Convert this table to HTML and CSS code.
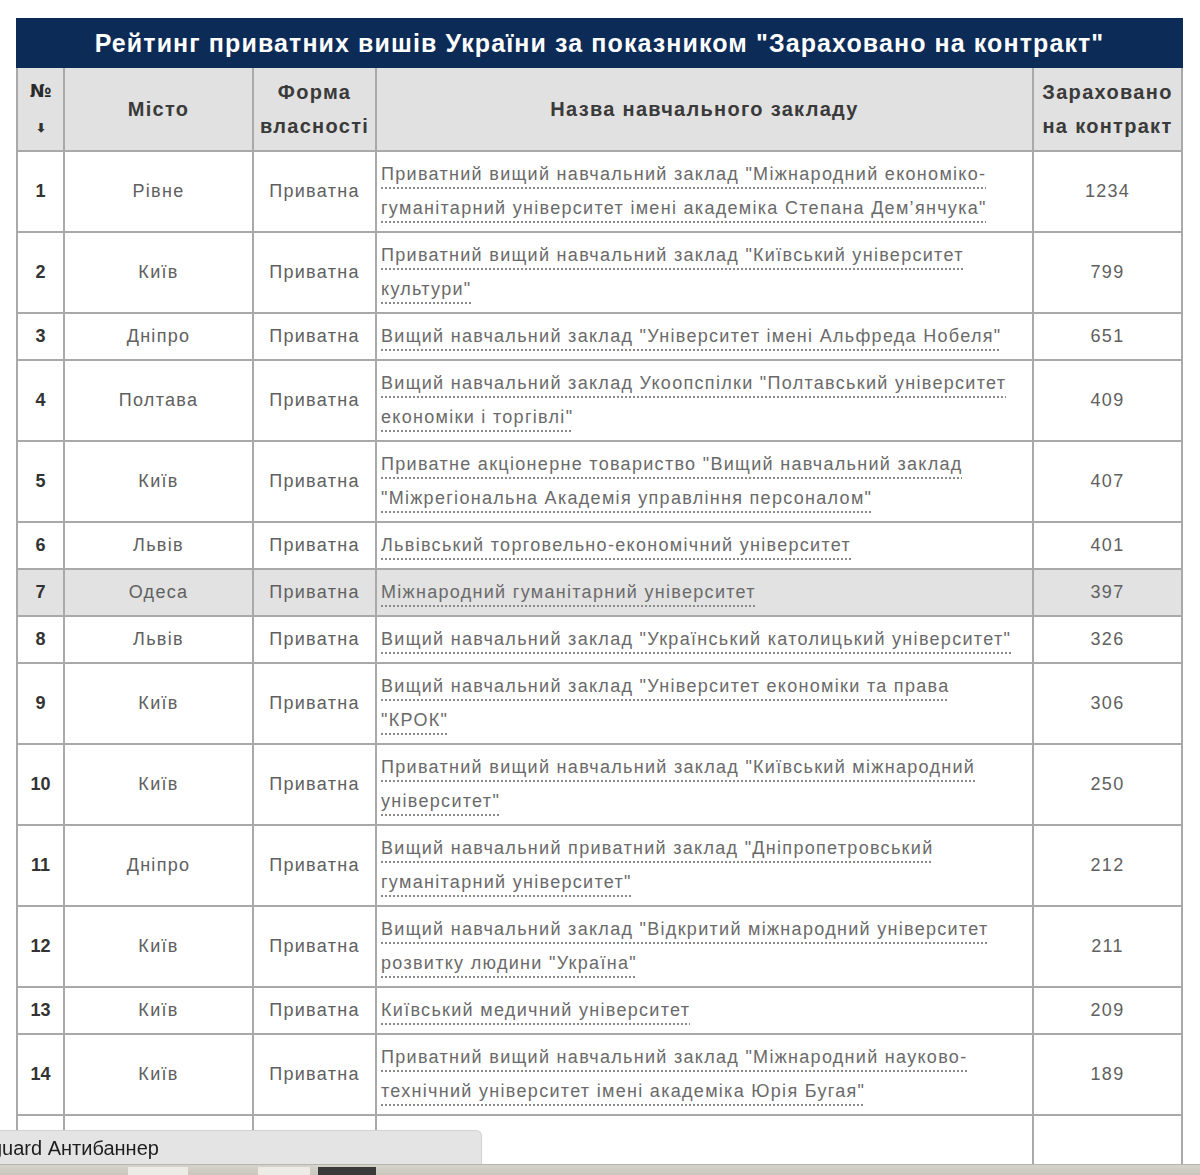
FILE: index.html
```html
<!DOCTYPE html>
<html lang="uk">
<head>
<meta charset="utf-8">
<title>Рейтинг приватних вишів України</title>
<link rel="stylesheet" href="styles.css">
</head>
<body>
<table class="rating">
  <colgroup>
    <col class="c-num"><col class="c-city"><col class="c-form"><col class="c-name"><col class="c-val">
  </colgroup>
  <thead>
    <tr><th class="title" colspan="5">Рейтинг приватних вишів України за показником "Зараховано на контракт"</th></tr>
    <tr class="head">
      <th class="h-num"><span class="numsign">№</span><br><span class="sort">&#x2B07;</span></th>
      <th>Місто</th>
      <th>Форма<br>власності</th>
      <th>Назва навчального закладу</th>
      <th>Зараховано<br>на контракт</th>
    </tr>
  </thead>
  <tbody>
    <tr><td class="n">1</td><td>Рівне</td><td>Приватна</td><td class="name"><a href="#">Приватний вищий навчальний заклад "Міжнародний економіко-<br>гуманітарний університет імені академіка Степана Дем’янчука"</a></td><td>1234</td></tr>
    <tr><td class="n">2</td><td>Київ</td><td>Приватна</td><td class="name"><a href="#">Приватний вищий навчальний заклад "Київський університет<br>культури"</a></td><td>799</td></tr>
    <tr><td class="n">3</td><td>Дніпро</td><td>Приватна</td><td class="name"><a href="#">Вищий навчальний заклад "Університет імені Альфреда Нобеля"</a></td><td>651</td></tr>
    <tr><td class="n">4</td><td>Полтава</td><td>Приватна</td><td class="name"><a href="#">Вищий навчальний заклад Укоопспілки "Полтавський університет<br>економіки і торгівлі"</a></td><td>409</td></tr>
    <tr><td class="n">5</td><td>Київ</td><td>Приватна</td><td class="name"><a href="#">Приватне акціонерне товариство "Вищий навчальний заклад<br>"Міжрегіональна Академія управління персоналом"</a></td><td>407</td></tr>
    <tr><td class="n">6</td><td>Львів</td><td>Приватна</td><td class="name"><a href="#">Львівський торговельно-економічний університет</a></td><td>401</td></tr>
    <tr class="hl"><td class="n">7</td><td>Одеса</td><td>Приватна</td><td class="name"><a href="#">Міжнародний гуманітарний університет</a></td><td>397</td></tr>
    <tr><td class="n">8</td><td>Львів</td><td>Приватна</td><td class="name"><a href="#">Вищий навчальний заклад "Український католицький університет"</a></td><td>326</td></tr>
    <tr><td class="n">9</td><td>Київ</td><td>Приватна</td><td class="name"><a href="#">Вищий навчальний заклад "Університет економіки та права<br>"КРОК"</a></td><td>306</td></tr>
    <tr><td class="n">10</td><td>Київ</td><td>Приватна</td><td class="name"><a href="#">Приватний вищий навчальний заклад "Київський міжнародний<br>університет"</a></td><td>250</td></tr>
    <tr><td class="n">11</td><td>Дніпро</td><td>Приватна</td><td class="name"><a href="#">Вищий навчальний приватний заклад "Дніпропетровський<br>гуманітарний університет"</a></td><td>212</td></tr>
    <tr><td class="n">12</td><td>Київ</td><td>Приватна</td><td class="name"><a href="#">Вищий навчальний заклад "Відкритий міжнародний університет<br>розвитку людини "Україна"</a></td><td>211</td></tr>
    <tr><td class="n">13</td><td>Київ</td><td>Приватна</td><td class="name"><a href="#">Київський медичний університет</a></td><td>209</td></tr>
    <tr><td class="n">14</td><td>Київ</td><td>Приватна</td><td class="name"><a href="#">Приватний вищий навчальний заклад "Міжнародний науково-<br>технічний університет імені академіка Юрія Бугая"</a></td><td>189</td></tr>
    <tr class="last"><td class="n"></td><td></td><td></td><td class="name"></td><td></td></tr>
  </tbody>
</table>

<div class="tip"><span class="tip-text">guard Антибаннер</span></div>
<div class="taskbar">
  <span class="tb-btn light"></span>
  <span class="tb-btn light small"></span>
  <span class="tb-btn dark"></span>
</div>
</body>
</html>
```

FILE: styles.css
```css
html, body {
  margin: 0;
  padding: 0;
  background: #ffffff;
  height: 1175px;
  overflow: hidden;
}

body {
  padding: 18px 0 0 16px;
  font-family: "Liberation Sans", Arial, sans-serif;
  color: #606060;
}

.rating {
  width: 1165px;
  table-layout: fixed;
  border-collapse: collapse;
  font-size: 18px;
  letter-spacing: 1.3px;
}

.c-num { width: 47px; }
.c-city { width: 189px; }
.c-form { width: 123px; }
.c-name { width: 657px; }
.c-val { width: 149px; }

.rating th,
.rating td {
  border: 2px solid #a9a9a9;
  line-height: 34px;
  padding: 5px 4px 6px;
  text-align: center;
  vertical-align: middle;
}

.rating th.title {
  background: #0c2b57;
  border-color: #0c2b57;
  color: #ffffff;
  font-size: 25px;
  font-weight: bold;
  letter-spacing: 1.1px;
  height: 46px;
  padding: 0;
  line-height: 44px;
}

.head th {
  background: #e1e1e1;
  color: #3a3a3a;
  font-size: 20px;
  font-weight: bold;
  letter-spacing: 1.3px;
  padding: 5px 1px 5px;
}

.head th.h-num {
  letter-spacing: 0;
  color: #2a2a2a;
}

.numsign {
  font-family: "DejaVu Sans", "Liberation Sans", sans-serif;
  font-weight: bold;
  font-size: 18px;
}

.sort {
  font-size: 12px;
  color: #333333;
}

.rating td.n {
  font-weight: bold;
  color: #333333;
  letter-spacing: 0;
}

.rating td.name {
  text-align: left;
  padding-left: 4px;
  padding-right: 2px;
}

.rating td.name a {
  color: #6a6a6a;
  text-decoration: underline dotted #8a8a8a;
  text-decoration-thickness: 2px;
  text-underline-offset: 7px;
}

.rating tr.hl td {
  background: #e2e2e2;
}

.rating tr.last td {
  height: 60px;
}

.tip {
  position: fixed;
  left: 0;
  top: 1130px;
  width: 482px;
  height: 35px;
  box-sizing: border-box;
  background: #e4e4e4;
  border-top-right-radius: 6px;
  border-top: 1px solid #d2d2d2;
  border-right: 1px solid #d2d2d2;
  color: #1e1e1e;
  font-family: "Liberation Sans", Arial, sans-serif;
  font-size: 20px;
  line-height: 34px;
  overflow: hidden;
  white-space: nowrap;
}

.tip-text {
  display: block;
  margin-left: -9px;
}

.taskbar {
  position: fixed;
  left: 0;
  top: 1164px;
  width: 1200px;
  height: 11px;
  background: linear-gradient(#d6d3cb, #c9c6bd);
  border-top: 1px solid #b8b5ad;
  display: flex;
  gap: 70px;
  padding-left: 128px;
  box-sizing: border-box;
}

.tb-btn {
  display: block;
  width: 60px;
  height: 10px;
  margin-top: 2px;
}

.tb-btn.light { background: #ecebe6; }
.tb-btn.small { width: 52px; }
.tb-btn.dark { background: #3a3a3a; width: 58px; margin-left: -62px; }
```
